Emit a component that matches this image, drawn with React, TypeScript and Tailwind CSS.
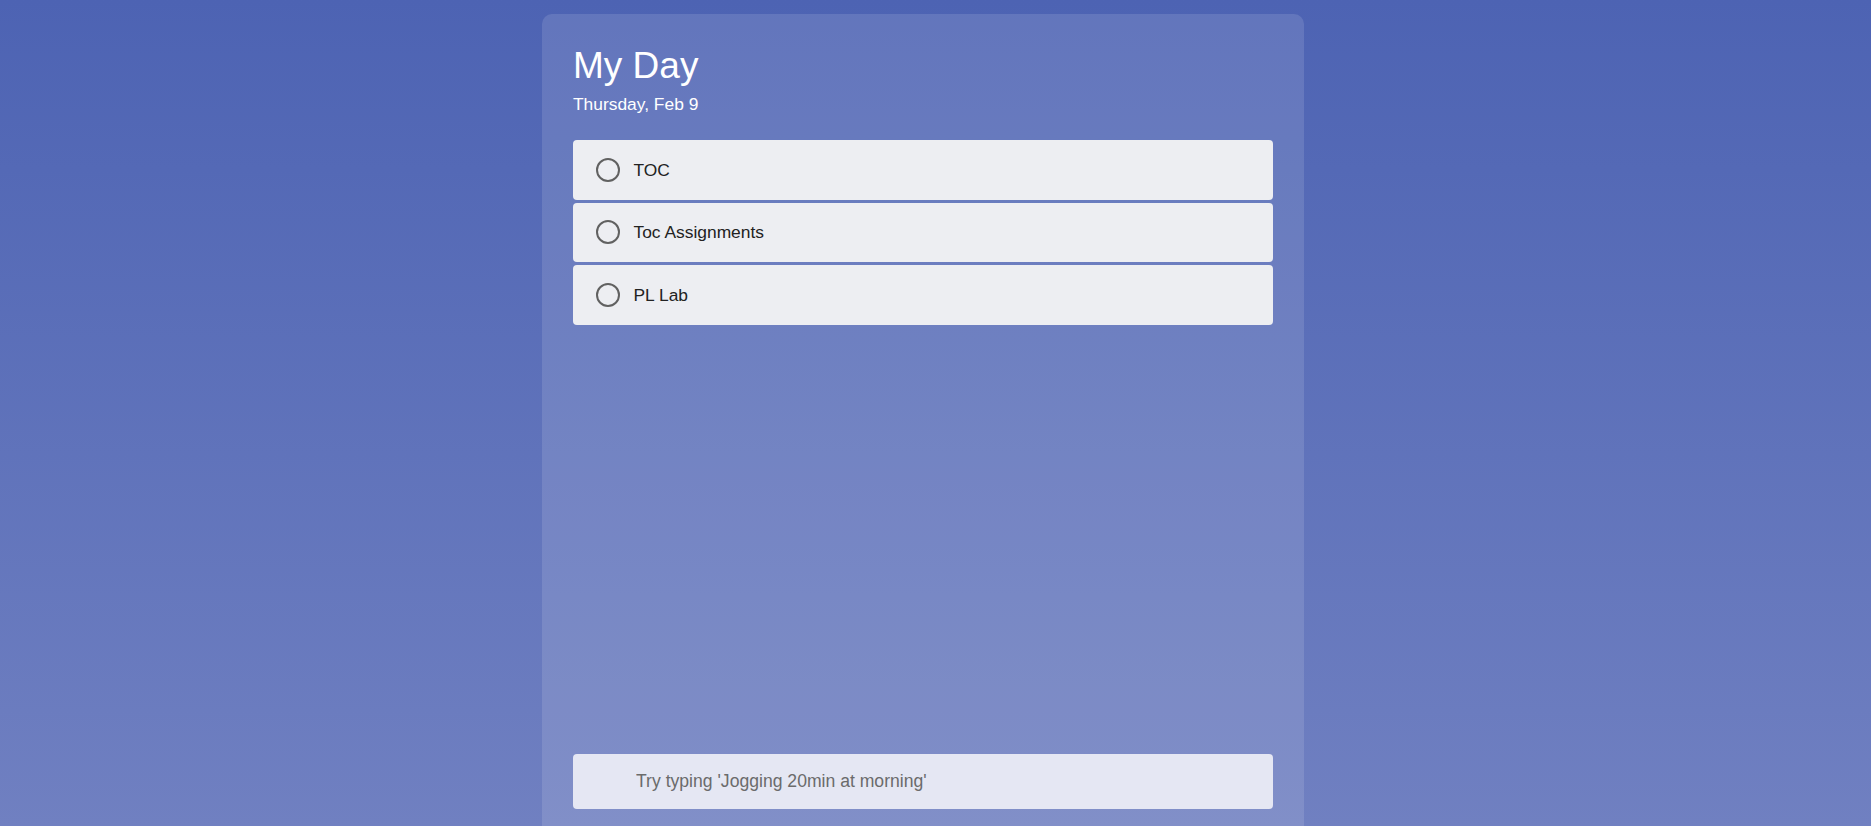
import React from 'react';

const tasks = ['TOC', 'Toc Assignments', 'PL Lab'];

function TaskRow({ title }: { title: string }) {
  return (
    <div className="flex h-[59.5px] items-center rounded-[4px] bg-[#edeef2] pl-[23px]">
      <span className="h-[24px] w-[24px] shrink-0 rounded-full border-2 border-[#616161]" />
      <span className="ml-[13.5px] text-[17.4px] text-[#222]">{title}</span>
    </div>
  );
}

export default function App() {
  return (
    <div
      className="h-screen overflow-hidden bg-gradient-to-b from-[#4d63b3] to-[#7080c1] pl-[542px] pt-[14px]"
      style={{ fontFamily: '"Liberation Sans", Arial, sans-serif' }}
    >
      <div className="flex h-screen w-[762px] flex-col rounded-[10px] bg-white/[0.12] px-[31px] pb-[31px] pt-[32px]">
        <h1 className="h-[40px] text-[37px] leading-[40px] text-white">My Day</h1>
        <p className="mt-[8px] text-[17.4px] leading-[20px] text-white">Thursday, Feb 9</p>

        <div className="mt-[26px] flex flex-col gap-[3px]">
          {tasks.map((t) => (
            <TaskRow key={t} title={t} />
          ))}
        </div>

        <div className="flex-1" />

        <input
          type="text"
          placeholder="Try typing 'Jogging 20min at morning'"
          className="h-[55.5px] w-full rounded-[4px] bg-[#e5e7f3] pl-[63px] text-[17.6px] text-[#333] outline-none placeholder:text-[#6b6b6b]"
        />
      </div>
    </div>
  );
}
